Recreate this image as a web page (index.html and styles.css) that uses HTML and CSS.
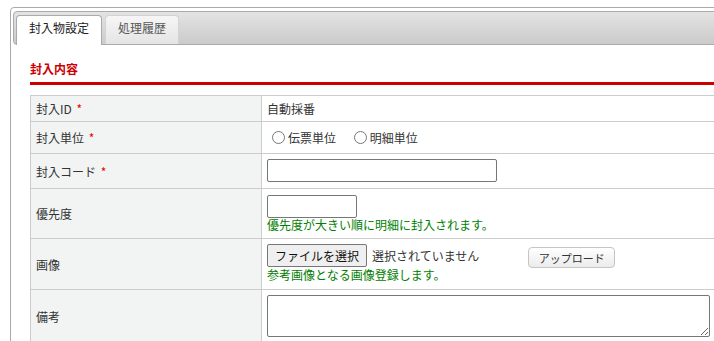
FILE: index.html
```html
<!DOCTYPE html>
<html lang="ja">
<head>
<meta charset="utf-8">
<title>封入物設定</title>
<link rel="stylesheet" href="styles.css">
</head>
<body>
<div class="page">
  <div class="tabs">
    <ul class="tab-nav">
      <li class="tab tab-active">封入物設定</li>
      <li class="tab">処理履歴</li>
    </ul>
    <div class="panel">
      <h2 class="section-title">封入内容</h2>
      <table class="form-table">
        <colgroup><col class="col-label"><col></colgroup>
        <tr class="row-text">
          <th>封入ID <span class="req">*</span></th>
          <td>自動採番</td>
        </tr>
        <tr class="row-radio">
          <th>封入単位 <span class="req">*</span></th>
          <td>
            <label class="radio"><input type="radio" name="unit">伝票単位</label>
            <label class="radio"><input type="radio" name="unit">明細単位</label>
          </td>
        </tr>
        <tr class="row-input">
          <th>封入コード <span class="req">*</span></th>
          <td><input type="text" class="text-input code-input"></td>
        </tr>
        <tr class="row-priority">
          <th>優先度</th>
          <td>
            <input type="text" class="text-input priority-input">
            <div class="help">優先度が大きい順に明細に封入されます。</div>
          </td>
        </tr>
        <tr class="row-image">
          <th>画像</th>
          <td>
            <div class="file-line">
              <button type="button" class="file-btn">ファイルを選択</button>
              <span class="file-status">選択されていません</span>
              <button type="button" class="upload-btn">アップロード</button>
            </div>
            <div class="help">参考画像となる画像登録します。</div>
          </td>
        </tr>
        <tr class="row-note">
          <th>備考</th>
          <td><textarea class="note"></textarea></td>
        </tr>
      </table>
    </div>
  </div>
</div>
</body>
</html>
```

FILE: styles.css
```css
html, body {
  margin: 0;
  padding: 0;
  overflow: hidden;
  background: #fff;
}
body {
  font-family: "Noto Sans CJK JP", "Noto Sans", sans-serif;
  font-size: 12px;
  color: #333;
}
.page {
  padding: 7px 0 0 10px;
}
.tabs {
  width: 720px;
  border: 1px solid #aaa;
  border-radius: 4px;
  padding: 3px 2px 0;
}
.tab-nav {
  display: flex;
  align-items: flex-start;
  list-style: none;
  margin: 0;
  padding: 3px 2px 0;
  border: 1px solid #aaa;
  border-radius: 4px;
  background: linear-gradient(#e3e3e3, #cbcbcb);
}
.tab {
  box-sizing: border-box;
  height: 29px;
  padding: 3px 12px 0;
  margin-right: 3px;
  line-height: 18px;
  border: 1px solid #d3d3d3;
  border-bottom: 0;
  border-radius: 4px 4px 0 0;
  background: linear-gradient(#f6f6f6, #e4e4e4);
  color: #555;
}
.tab-active {
  height: 30px;
  margin-bottom: -1px;
  border-color: #aaa;
  background: #fff;
  color: #222;
}
.panel {
  padding: 15px 17px 0;
}
.section-title {
  margin: 0;
  padding-bottom: 4px;
  font-size: 12px;
  line-height: 18px;
  font-weight: bold;
  color: #c00;
  border-bottom: 3px solid #c00;
}
.form-table {
  margin-top: 10px;
  width: 686px;
  table-layout: fixed;
  border-collapse: collapse;
}
.col-label {
  width: 231px;
}
.form-table th,
.form-table td {
  border: 1px solid #ccc;
  padding: 4px 5px;
  line-height: 17px;
  text-align: left;
  vertical-align: middle;
  font-weight: normal;
}
.form-table th {
  background: #f2f3f3;
  color: #333;
}
.req {
  color: #e00;
  margin-left: 2px;
}
.row-radio td {
  line-height: 23px;
}
.radio {
  display: inline-flex;
  align-items: center;
  vertical-align: top;
  height: 23px;
  margin-right: 10px;
}
.radio input {
  width: 13px;
  height: 13px;
  margin: 0 3px 0 5px;
}
.text-input {
  display: block;
  box-sizing: border-box;
  height: 23px;
  margin: 0;
  border: 1px solid #767676;
  border-radius: 2px;
  background: #fff;
}
.code-input {
  width: 230px;
}
.row-input td {
  padding: 5px 5px 6px;
}
.priority-input {
  width: 90px;
}
.row-priority td {
  padding: 6px 5px;
}
.help {
  line-height: 14px;
  color: #008000;
}
.row-image td {
  padding: 5px 5px 7px;
}
.file-line {
  display: flex;
  align-items: flex-start;
}
.file-btn {
  box-sizing: border-box;
  height: 23px;
  width: 100px;
  margin: 0;
  padding: 0;
  font-family: inherit;
  font-size: 12px;
  color: #111;
  background: #efefef;
  border: 1px solid #767676;
  border-radius: 2px;
}
.file-status {
  margin-left: 5px;
  line-height: 23px;
  color: #333;
}
.upload-btn {
  box-sizing: border-box;
  width: 87px;
  height: 21px;
  margin: 3px 0 0 49px;
  padding: 0;
  font-family: inherit;
  font-size: 11px;
  color: #333;
  border: 1px solid #c5c5c5;
  border-radius: 4px;
  background: linear-gradient(#ffffff, #ebebeb);
}
.row-note td {
  padding: 5px;
}
.note {
  display: block;
  box-sizing: border-box;
  width: 443px;
  height: 42px;
  margin: 0;
  border: 1px solid #767676;
  border-radius: 2px;
  resize: both;
}
```
